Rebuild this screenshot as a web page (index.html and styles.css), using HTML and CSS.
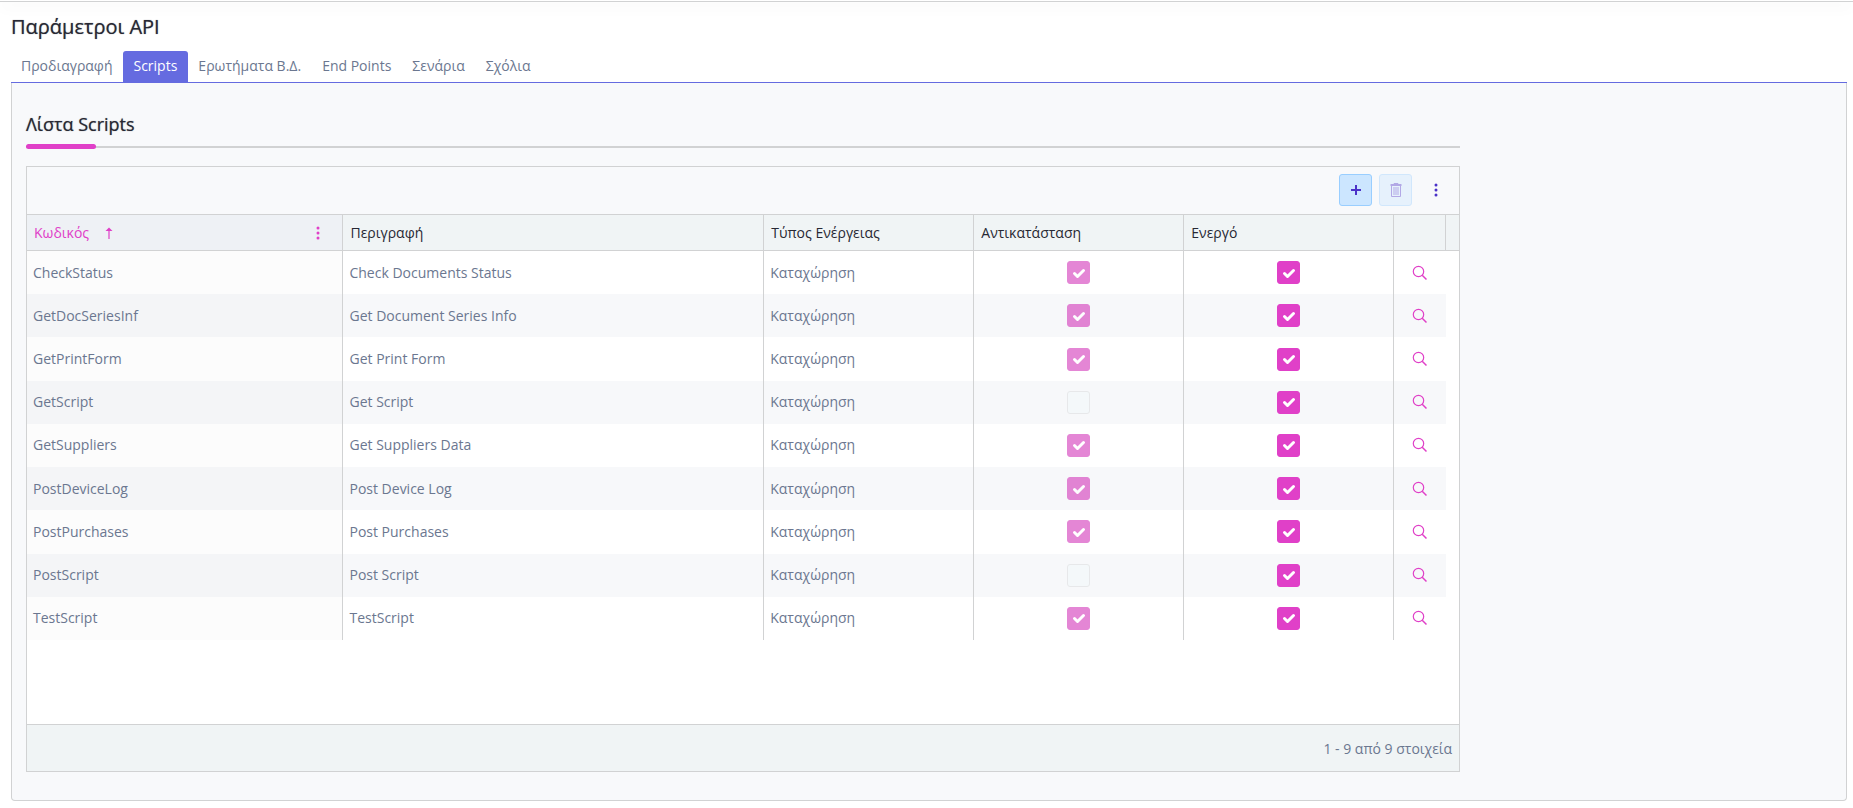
FILE: index.html
```html
<!DOCTYPE html>
<html lang="el">
<head>
<meta charset="UTF-8">
<meta name="viewport" content="width=device-width, initial-scale=1.0">
<title>Παράμετροι API</title>
<link rel="stylesheet" href="styles.css">
</head>
<body>
<svg class="sprite">
	<symbol id="i-search" viewBox="0 0 16 16"><circle cx="6.500" cy="6.500" r="5.200" fill="none" stroke="currentColor" stroke-width="1.200"/><path d="M10.200 10.200L14.500 14.500" stroke="currentColor" stroke-width="1.500" fill="none"/></symbol>
	<symbol id="i-more" viewBox="0 0 4 14"><circle cx="2" cy="2" r="1.500"/><circle cx="2" cy="7" r="1.500"/><circle cx="2" cy="12" r="1.500"/></symbol>
</svg>
<div class="topbar"></div>
<main class="page">
	<h1 class="page-title">Παράμετροι API</h1>
	<nav class="tabs">
		<a href="#" class="tab">Προδιαγραφή</a>
		<a href="#" class="tab active">Scripts</a>
		<a href="#" class="tab">Ερωτήματα Β.Δ.</a>
		<a href="#" class="tab">End Points</a>
		<a href="#" class="tab">Σενάρια</a>
		<a href="#" class="tab">Σχόλια</a>
	</nav>
	<div class="panel">
		<section class="list">
			<h2 class="list-title">Λίστα Scripts</h2>
			<div class="rule"><div class="rule-mark"></div></div>
			<div class="grid">
				<div class="toolbar">
					<button class="btn" aria-label="Προσθήκη"><svg width="12" height="12" viewBox="0 0 12 12"><path d="M6 1v10M1 6h10" stroke="currentColor" stroke-width="2"/></svg></button>
					<button class="btn" aria-label="Διαγραφή" disabled><svg width="12" height="16" viewBox="0 0 12 16"><path d="M4 2.500V1.500h4v1M1.500 4v10.500h9V4M4 5v8M6 5v8M8 5v8" fill="none" stroke="currentColor"/><path d="M.500 3h11" stroke="currentColor" stroke-width="2"/></svg></button>
					<button class="more" aria-label="Περισσότερα"><svg width="4" height="14"><use href="#i-more"/></svg></button>
				</div>
				<div class="head-row">
					<table class="table">
						<colgroup><col class="c-code"><col class="c-desc"><col class="c-type"><col class="c-type"><col class="c-type"><col class="c-view"></colgroup>
						<thead>
							<tr>
								<th class="sorted"><div class="th-inner"><span>Κωδικός</span><svg class="arrow" width="8" height="12" viewBox="0 0 8 12"><path d="M4 12V2" stroke="currentColor" stroke-width="1.200"/><path d="M4 .500L7.500 4h-7z"/></svg><button class="col-menu" aria-label="Μενού στήλης"><svg width="4" height="14"><use href="#i-more"/></svg></button></div></th>
								<th>Περιγραφή</th>
								<th>Τύπος Ενέργειας</th>
								<th>Αντικατάσταση</th>
								<th>Ενεργό</th>
								<th></th>
							</tr>
						</thead>
					</table>
				</div>
				<div class="body-rows">
					<table class="table rows">
						<colgroup><col class="c-code"><col class="c-desc"><col class="c-type"><col class="c-type"><col class="c-type"><col class="c-view"></colgroup>
						<tbody id="rows"></tbody>
					</table>
				</div>
				<div class="pager">1 - 9 από 9 στοιχεία</div>
			</div>
		</section>
	</div>
</main>
<script>
// code, description, replace
var scripts = [
	['CheckStatus', 'Check Documents Status', true],
	['GetDocSeriesInf', 'Get Document Series Info', true],
	['GetPrintForm', 'Get Print Form', true],
	['GetScript', 'Get Script', false],
	['GetSuppliers', 'Get Suppliers Data', true],
	['PostDeviceLog', 'Post Device Log', true],
	['PostPurchases', 'Post Purchases', true],
	['PostScript', 'Post Script', false],
	['TestScript', 'TestScript', true]
];
document.getElementById('rows').innerHTML = scripts.map(function (s) {
	return '<tr><td>' + s[0] + '</td><td>' + s[1] + '</td><td>Καταχώρηση</td>' +
		'<td class="mid"><input type="checkbox" class="check" aria-label="Αντικατάσταση" disabled' + (s[2] ? ' checked' : '') + '></td>' +
		'<td class="mid"><input type="checkbox" class="check" aria-label="Ενεργό" checked></td>' +
		'<td class="mid"><button class="view" aria-label="Προβολή"><svg width="16" height="16"><use href="#i-search"/></svg></button></td></tr>';
}).join('');
</script>
</body>
</html>
```
FILE: styles.css
```css
* { box-sizing: border-box; }
body { margin: 0; background: #fff; color: #6b7790; font: 14px/20px "Open Sans", "Noto Sans", sans-serif; }
button { padding: 0; border: 0; background: none; font: inherit; cursor: pointer; }
svg { display: block; fill: currentColor; }
.sprite { display: none; }

.topbar { height: 2px; border-bottom: 1px solid #d1d2d3; box-shadow: 0 4px 14px rgba(0, 0, 0, .1); }
.page { padding: 9px 6px 7px 11px; }
.page-title, .list-title { margin: 0; font-weight: 500; color: #272833; text-shadow: 0 0 1px rgba(39, 40, 51, .6); }
.page-title { font-size: 20px; line-height: 32px; }

.tabs { display: flex; margin-top: 8px; border-bottom: 1px solid #656be0; }
.tab { padding: 5px 11px 6px 10px; border-radius: 3px 3px 0 0; color: #6b7790; text-decoration: none; }
.tab.active { background: #656be0; color: #fff; }

.panel { display: grid; grid-template-columns: 27fr 7fr; padding: 27px 14px 28px; border: 1px solid #d1d2d3; border-top: 0; border-radius: 0 0 4px 4px; background: #f8f9fb; }
.list { min-width: 0; }
.list-title { font-size: 18px; line-height: 28px; }
.rule { display: flex; align-items: center; height: 5px; margin: 6px 0 17px; background: linear-gradient(#d1d2d3, #d1d2d3) 0 2px / 100% 2px no-repeat; }
.rule-mark { width: 70px; height: 5px; border-radius: 3px; background: #e040c8; }

.grid { border: 1px solid #d1d2d3; background: #fff; }
.toolbar { display: flex; justify-content: flex-end; gap: 7px; padding: 7px 7px 8px; background: #f8f9fb; }
.btn { display: flex; align-items: center; justify-content: center; width: 33px; height: 32px; border: 1px solid #99ceff; border-radius: 3px; background: #cce6ff; color: #4b32c8; }
.btn:disabled { opacity: .4; }
.more { display: flex; align-items: center; justify-content: center; width: 33px; color: #4b32c8; }

.head-row { padding-right: 13px; border-top: 1px solid #d1d2d3; border-bottom: 1px solid #d1d2d3; background: #f0f4f5; }
.body-rows { height: 473px; padding-right: 13px; }
.table { width: 100%; table-layout: fixed; border-collapse: separate; border-spacing: 0; }
.c-code { width: 22.3%; }
.c-desc { width: 29.65%; }
.c-type { width: 14.8%; }
.table th { height: 35px; padding: 0 7px; border-right: 1px solid #d1d2d3; text-align: left; font-weight: 400; color: #272833; }
.table th.sorted { background: #eef1f5; color: #e040c8; }
.th-inner { display: flex; align-items: center; }
.arrow { margin-left: 16px; }
.col-menu { margin: 0 15px 0 auto; color: inherit; }

.rows { height: 389px; }
.table td { padding: 0 6px; border-right: 1px solid #d1d2d3; }
.table td:last-child { border-right: 0; }
.table td:first-child { background: #fcfcfc; }
.table tr:nth-child(even) td { background: #f7f8fa; }
.table tr:nth-child(even) td:first-child { background: #f4f5f7; }
.table td.mid { text-align: center; }
.check { display: block; width: 23px; height: 23px; margin: 0 auto; border: 1px solid #d1d2d3; border-radius: 3px; background: #f0fafa; appearance: none; }
.check:checked { border-color: #e040c8; background: #e040c8 url("data:image/svg+xml,%3Csvg xmlns='http://www.w3.org/2000/svg' viewBox='0 0 16 16'%3E%3Cpath d='M3.500 8.500l3 3 6-6' fill='none' stroke='%23fff' stroke-width='3' stroke-linecap='round' stroke-linejoin='round'/%3E%3C/svg%3E") center / 16px no-repeat; }
.check:disabled { opacity: .4; }
.check:checked:disabled { border-color: #d646bf; background-color: #d646bf; opacity: .65; }
.view { display: block; margin: 0 auto; color: #e040c8; }

.pager { padding: 14px 7px 12px; border-top: 1px solid #d1d2d3; background: #f0f4f5; text-align: right; }
```
